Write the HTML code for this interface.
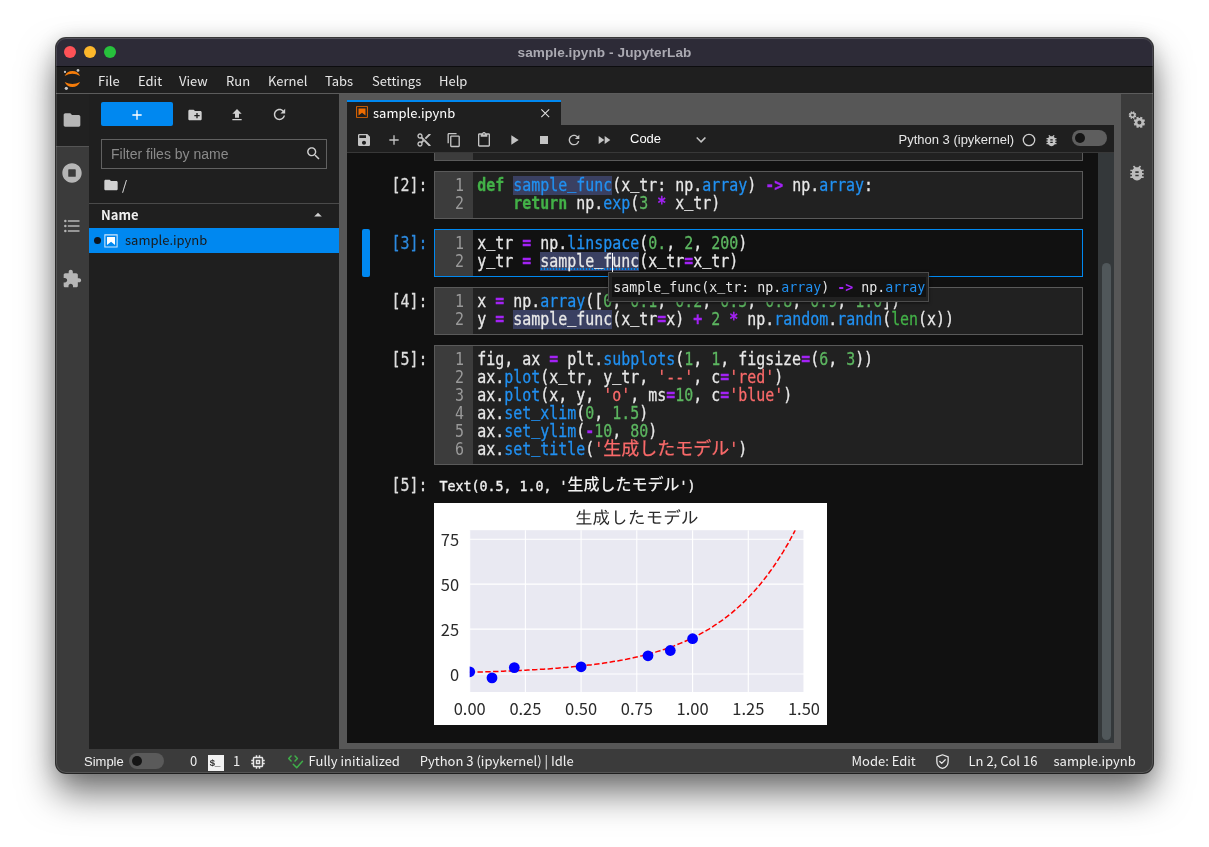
<!DOCTYPE html>
<html lang="ja">
<head>
<meta charset="utf-8">
<title>sample.ipynb - JupyterLab</title>
<style>
html,body{margin:0;padding:0;background:#fff;}
body{width:1209px;height:847px;position:relative;overflow:hidden;
  font-family:"Liberation Sans","Noto Sans CJK JP",sans-serif;font-size:13px;color:#e0e0e0;}
.abs{position:absolute;}
svg{display:block;}
#win{position:absolute;left:56px;top:38px;width:1097px;height:735px;border-radius:10px;
  background:#3b3b3b;
  box-shadow:0 0 0 1px rgba(0,0,0,.75),0 20px 36px rgba(0,0,0,.55),0 2px 20px rgba(0,0,0,.15);}
#clip{will-change:transform;position:absolute;left:0;top:0;width:1097px;height:735px;border-radius:10px;overflow:hidden;}
#titlebar{position:absolute;left:0;top:0;width:1097px;height:29px;background:#2d2b37;
  border-bottom:1px solid #0c0c0e;box-sizing:border-box;}
#titlebar .hl{position:absolute;left:0;top:0;width:100%;height:1px;background:rgba(255,255,255,.06);}
#title{position:absolute;left:0;width:1097px;top:6.500px;letter-spacing:0.070px;text-align:center;
  font:bold 13.6px "Liberation Sans",sans-serif;color:#abaab2;line-height:16px;}
.tl{position:absolute;top:8px;width:12px;height:12px;border-radius:50%;}
#menubar{position:absolute;left:0;top:29px;width:1097px;height:27px;background:#1f1f1f;
  border-bottom:1px solid #5c5c5c;box-sizing:border-box;}
.menu{position:absolute;top:5px;font:13px "Noto Sans CJK JP","Liberation Sans",sans-serif;color:#e6e6e6;line-height:18px;white-space:pre;}
.ns{font-family:"Noto Sans CJK JP","Liberation Sans",sans-serif;}
.mono{font-family:"DejaVu Sans Mono","Liberation Mono","Noto Sans CJK JP",monospace;}

#nb .pr{-webkit-text-stroke-width:0.250px;position:absolute;left:44.5px;width:36px;height:18px;font:14.95px/18px "DejaVu Sans Mono","Liberation Mono",monospace;color:#dedede;white-space:pre;transform:scaleY(1.16);transform-origin:0 14.2px;}
#nb .pr.act{color:#2c8ae0;}
#nb .cell{position:absolute;left:87px;width:649px;box-sizing:border-box;border:1px solid #5a5a5a;background:#212121;}
#nb .cell.act{border-color:#0088f0;background:#111;}
#nb .gut{position:absolute;left:0;top:0;bottom:0;width:38px;background:#3c3c3c;}
#nb .ln{position:absolute;left:0;width:29px;text-align:right;font:14.95px/18px "DejaVu Sans Mono","Liberation Mono",monospace;color:#9a9a9a;height:18px;transform:scaleY(1.16);transform-origin:0 14.2px;}
#nb .cl{-webkit-text-stroke-width:0.250px;position:absolute;left:42.3px;height:18px;font:14.95px/18px "DejaVu Sans Mono","Liberation Mono",monospace;color:#e8e8e8;white-space:pre;transform:scaleY(1.16);transform-origin:0 14.2px;}
#nb .jp{font-family:"Noto Sans CJK JP",sans-serif;font-size:18px;font-weight:400;line-height:0;display:inline-block;transform:scaleY(0.862);transform-origin:0 0;position:relative;top:1.300px;}
#nb .jp2{font-family:"Noto Sans CJK JP",sans-serif;font-size:16px;line-height:0;font-weight:500;display:inline-block;transform:scaleY(0.909);-webkit-text-stroke:0;}
#nb .otxt{position:absolute;height:18px;-webkit-text-stroke:0.350px #f0f0f0;font:normal 13.29px/18px "DejaVu Sans Mono","Liberation Mono",monospace;color:#f0f0f0;white-space:pre;transform:scaleY(1.1);transform-origin:0 13.3px;}
#nb .otxt.tip{font-weight:normal;color:#e6e6e6;-webkit-text-stroke:0;}
#nb .hlb{position:absolute;height:18.9px;background:#3a4062;}
#nb .ulb{position:absolute;height:2px;background-image:radial-gradient(circle,#0088f0 0.9px,transparent 1.2px);background-size:3px 2px;}
.us{position:relative;top:-1.600px;}
.kw{color:#43b148;font-weight:bold;}
.def{color:#2191f2;}
.pp{color:#2191f2;}
.op{color:#a322f5;font-weight:bold;}
.nu{color:#5db761;}
.bi{color:#43b148;}
.st{color:#fa6a6a;}
</style>
</head>
<body>
<div id="win"><div id="clip">
  <div id="titlebar"><div class="hl"></div>
    <div class="tl" style="left:8px;background:#fe5257;"></div>
    <div class="tl" style="left:28px;background:#fdb72b;"></div>
    <div class="tl" style="left:48px;background:#27c13c;"></div>
    <div id="title">sample.ipynb - JupyterLab</div>
  </div>
  <div id="menubar">
    <svg class="abs" style="left:0;top:0" width="34" height="27" viewBox="0 29 34 27"><g fill="#f57c0a"><path d="M8.700 37.900A8.430 8.430 0 0 1 24.100 37.900A15.800 15.800 0 0 0 8.700 37.900Z"/><path d="M8.700 43.900A8.430 8.430 0 0 0 24.100 43.900A15.800 15.800 0 0 1 8.700 43.900Z"/></g><g fill="#c8c8c8"><circle cx="22" cy="32.400" r="1.400"/><circle cx="9" cy="33.900" r="1.100"/><circle cx="10.300" cy="50.300" r="1.600"/></g></svg>
    <div class="menu" style="left:42px">File</div>
    <div class="menu" style="left:82px">Edit</div>
    <div class="menu" style="left:123px">View</div>
    <div class="menu" style="left:170px">Run</div>
    <div class="menu" style="left:212px">Kernel</div>
    <div class="menu" style="left:269px">Tabs</div>
    <div class="menu" style="left:316px">Settings</div>
    <div class="menu" style="left:383px">Help</div>
  </div>

  <!-- left sidebar -->
  <div class="abs" style="left:0;top:56px;width:33px;height:655px;background:#3b3b3b;"></div>
  <div class="abs" style="left:32.5px;top:109px;width:1px;height:602px;background:#555;"></div>
  <div class="abs" style="left:0;top:107.5px;width:33px;height:1px;background:#555;"></div>
  <div class="abs" style="left:0;top:56px;width:33px;height:51.5px;background:#212121;"></div>
  <svg class="abs" style="left:6px;top:71.800px" width="20" height="20" viewBox="0 0 24 24"><path fill="#b6b6b6" d="M10 4H4c-1.100 0-1.990.9-1.990 2L2 18c0 1.100.9 2 2 2h16c1.100 0 2-.9 2-2V8c0-1.100-.9-2-2-2h-8l-2-2z"/></svg>
  <svg class="abs" style="left:6px;top:125px" width="20" height="20" viewBox="0 0 512 512"><path fill="#b6b6b6" d="M256 8C119 8 8 119 8 256s111 248 248 248 248-111 248-248S393 8 256 8zm96 328c0 8.800-7.200 16-16 16H176c-8.800 0-16-7.200-16-16V176c0-8.800 7.200-16 16-16h160c8.800 0 16 7.200 16 16v160z"/></svg>
  <svg class="abs" style="left:6px;top:177.7px" width="20" height="20" viewBox="0 0 24 24"><path fill="#b6b6b6" d="M7,5H21V7H7V5M7,13V11H21V13H7M4,4.500A1.500,1.500 0 0,1 5.500,6A1.500,1.500 0 0,1 4,7.500A1.500,1.500 0 0,1 2.500,6A1.500,1.500 0 0,1 4,4.500M4,10.500A1.500,1.500 0 0,1 5.500,12A1.500,1.500 0 0,1 4,13.500A1.500,1.500 0 0,1 2.500,12A1.500,1.500 0 0,1 4,10.500M7,19V17H21V19H7M4,16.500A1.500,1.500 0 0,1 5.500,18A1.500,1.500 0 0,1 4,19.500A1.500,1.500 0 0,1 2.500,18A1.500,1.500 0 0,1 4,16.500Z"/></svg>
  <svg class="abs" style="left:6px;top:230.700px" width="20" height="20" viewBox="0 0 24 24"><path fill="#b6b6b6" d="M20.500 11H19V7c0-1.100-.9-2-2-2h-4V3.500C13 2.120 11.880 1 10.500 1S8 2.120 8 3.500V5H4c-1.100 0-1.990.9-1.990 2v3.800H3.500c1.490 0 2.700 1.210 2.700 2.700s-1.210 2.700-2.700 2.700H2V20c0 1.100.9 2 2 2h3.800v-1.500c0-1.490 1.210-2.700 2.700-2.700 1.490 0 2.700 1.210 2.700 2.700V22H17c1.100 0 2-.9 2-2v-4h1.500c1.380 0 2.500-1.120 2.500-2.500S21.880 11 20.500 11z"/></svg>

  <!-- file browser -->
  <div class="abs" style="left:33px;top:56px;width:250px;height:655px;background:#1f1f1f;"></div>
  <div class="abs" style="left:45px;top:64px;width:72px;height:24px;background:#0088f0;border-radius:2px;"></div>
  <svg class="abs" style="left:73px;top:68.7px" width="16" height="16" viewBox="0 0 24 24"><path fill="#fff" d="M19 13h-6v6h-2v-6H5v-2h6V5h2v6h6v2z"/></svg>
  <svg class="abs" style="left:131px;top:68.7px" width="16" height="16" viewBox="0 0 24 24"><path fill="#d0d0d0" d="M20 6h-8l-2-2H4c-1.110 0-1.990.890-1.990 2L2 18c0 1.110.890 2 2 2h16c1.110 0 2-.890 2-2V8c0-1.110-.890-2-2-2zm-1 8h-3v3h-2v-3h-3v-2h3V9h2v3h3v2z"/></svg>
  <svg class="abs" style="left:173px;top:68.7px" width="16" height="16" viewBox="0 0 24 24"><path fill="#d0d0d0" d="M9 16h6v-6h4l-7-7-7 7h4zm-4 2h14v2H5z"/></svg>
  <svg class="abs" style="left:214.5px;top:68.2px" width="17" height="17" viewBox="0 0 18 18"><path fill="#d0d0d0" d="M9 13.500c-2.490 0-4.500-2.010-4.500-4.500S6.510 4.500 9 4.500c1.240 0 2.360.520 3.170 1.330L10 8h5V3l-1.760 1.760C12.150 3.680 10.660 3 9 3 5.690 3 3.010 5.690 3.010 9S5.690 15 9 15c2.970 0 5.430-2.160 5.900-5h-1.520c-.460 2-2.240 3.500-4.380 3.500z"/></svg>
  <div class="abs" style="left:45px;top:101px;width:226px;height:30px;box-sizing:border-box;border:1px solid #616161;"></div>
  <div class="abs" style="left:55px;top:108px;font:14px 'Liberation Sans',sans-serif;color:#8a8a8a;line-height:16px;white-space:pre;">Filter files by name</div>
  <svg class="abs" style="left:249px;top:107px" width="17" height="17" viewBox="0 0 24 24"><path fill="#d0d0d0" d="M15.500 14h-.790l-.280-.270C15.410 12.590 16 11.110 16 9.500 16 5.910 13.090 3 9.500 3S3 5.910 3 9.500 5.910 16 9.500 16c1.610 0 3.090-.590 4.230-1.570l.270.280v.790l5 4.990L20.490 19l-4.990-5zm-6 0C7.010 14 5 11.990 5 9.500S7.010 5 9.500 5 14 7.010 14 9.500 11.990 14 9.500 14z"/></svg>
  <svg class="abs" style="left:47px;top:139px" width="16" height="16" viewBox="0 0 24 24"><path fill="#d0d0d0" d="M10 4H4c-1.100 0-1.990.9-1.990 2L2 18c0 1.100.9 2 2 2h16c1.100 0 2-.9 2-2V8c0-1.100-.9-2-2-2h-8l-2-2z"/></svg>
  <div class="abs ns" style="left:66px;top:138px;font-size:13px;color:#e0e0e0;line-height:18px;">/</div>
  <div class="abs" style="left:33px;top:164.500px;width:250px;height:1px;background:#4a4a4a;"></div>
  <div class="abs ns" style="left:45px;top:167px;font-size:13px;font-weight:bold;color:#f0f0f0;line-height:20px;">Name</div>
  <svg class="abs" style="left:253px;top:168px" width="18" height="18" viewBox="0 0 18 18"><path fill="#d0d0d0" d="M5.200 10.500L9 6.800l3.800 3.700H5.200z"/></svg>
  <div class="abs" style="left:33px;top:189.500px;width:250px;height:25px;background:#0088f0;"></div>
  <div class="abs" style="left:37.500px;top:199px;width:7.400px;height:7.400px;border-radius:50%;background:#0d1520;"></div>
  <svg class="abs" style="left:46.500px;top:194.500px" width="16" height="16" viewBox="0 0 22 22"><g fill="#fff"><path fill="#cfe6fb" d="M18.700 3.300v15.400H3.300V3.300h15.400m1.500-1.500H1.800v18.300h18.300l.1-18.300z"/><path d="M16.500 16.500l-5.400-4.300-5.600 4.300v-11h11z"/></g></svg>
  <div class="abs ns" style="left:69px;top:192.500px;font-size:13px;color:#1a1a1a;line-height:18px;">sample.ipynb</div>

  <!-- splitters / dock bg -->
  <div class="abs" style="left:283px;top:56px;width:782px;height:655px;background:#575757;"></div>

  <!-- tab -->
  <div class="abs" style="left:291px;top:62px;width:214px;height:25px;background:#1f1f1f;border-top:2px solid #0088f0;box-sizing:border-box;"></div>
  <svg class="abs" style="left:299px;top:67px" width="14" height="14" viewBox="0 0 22 22"><g fill="#ef6c00"><path d="M18.700 3.300v15.400H3.300V3.300h15.400m1.500-1.500H1.800v18.300h18.300l.1-18.300z"/><path d="M16.500 16.500l-5.400-4.300-5.600 4.300v-11h11z"/></g></svg>
  <div class="abs ns" style="left:317px;top:65.500px;font-size:13px;color:#fff;line-height:18px;">sample.ipynb</div>
  <svg class="abs" style="left:484px;top:69.500px" width="10.500" height="10.500" viewBox="0 0 12 12"><path d="M1.500 1.500L10.500 10.500M10.500 1.500L1.500 10.500" stroke="#e0e0e0" stroke-width="1.200" fill="none"/></svg>
  <!-- toolbar -->
  <div class="abs" style="left:291px;top:87px;width:767px;height:28px;background:#1f1f1f;border-bottom:1px solid #383838;box-sizing:border-box;"></div>
  <svg class="abs" style="left:299.8px;top:94.100px" width="16" height="16" viewBox="0 0 24 24"><path fill="#c4c4c4" d="M17 3H5c-1.110 0-2 .9-2 2v14c0 1.100.890 2 2 2h14c1.100 0 2-.9 2-2V7l-4-4zm-5 16c-1.660 0-3-1.340-3-3s1.340-3 3-3 3 1.340 3 3-1.340 3-3 3zm3-10H5V5h10v4z"/></svg>
  <svg class="abs" style="left:329.8px;top:94.100px" width="16" height="16" viewBox="0 0 24 24"><path fill="#c4c4c4" d="M19 13h-6v6h-2v-6H5v-2h6V5h2v6h6v2z"/></svg>
  <svg class="abs" style="left:359.8px;top:94.100px" width="16" height="16" viewBox="0 0 24 24"><path fill="#c4c4c4" d="M9.640 7.640c.230-.5.360-1.050.360-1.640 0-2.210-1.790-4-4-4S2 3.790 2 6s1.790 4 4 4c.590 0 1.140-.130 1.640-.360L10 12l-2.360 2.360C7.140 14.130 6.590 14 6 14c-2.210 0-4 1.790-4 4s1.790 4 4 4 4-1.790 4-4c0-.590-.130-1.140-.360-1.640L12 14l7 7h3v-1L9.640 7.640zM6 8c-1.100 0-2-.890-2-2s.9-2 2-2 2 .890 2 2-.9 2-2 2zm0 12c-1.100 0-2-.890-2-2s.9-2 2-2 2 .890 2 2-.9 2-2 2zm6-7.500c-.280 0-.5-.220-.5-.5s.220-.5.5-.5.5.220.5.5-.220.5-.5.5zM19 3l-6 6 2 2 7-7V3z"/></svg>
  <svg class="abs" style="left:389.8px;top:94.100px" width="16" height="16" viewBox="0 0 18 18"><path fill="#c4c4c4" d="M11.900 1H3.200c-.8 0-1.500.7-1.500 1.500v10.200h1.500V2.500h8.700V1zm2.200 2.900h-8c-.8 0-1.500.7-1.500 1.500v10.200c0 .8.700 1.500 1.500 1.500h8c.8 0 1.500-.7 1.500-1.500V5.400c0-.8-.7-1.500-1.500-1.500zm0 11.600h-8V5.400h8v10.100z"/></svg>
  <svg class="abs" style="left:419.8px;top:94.100px" width="16" height="16" viewBox="0 0 24 24"><path fill="#c4c4c4" d="M19 2h-4.180C14.400.840 13.300 0 12 0c-1.300 0-2.400.840-2.820 2H5c-1.100 0-2 .9-2 2v16c0 1.100.9 2 2 2h14c1.100 0 2-.9 2-2V4c0-1.100-.9-2-2-2zm-7 0c.550 0 1 .450 1 1s-.450 1-1 1-1-.450-1-1 .450-1 1-1zm7 18H5V4h2v3h10V4h2v16z"/></svg>
  <svg class="abs" style="left:449.8px;top:94.100px" width="16" height="16" viewBox="0 0 24 24"><path fill="#c4c4c4" d="M8 5v14l11-7z"/></svg>
  <svg class="abs" style="left:479.8px;top:94.100px" width="16" height="16" viewBox="0 0 24 24"><path fill="#c4c4c4" d="M6 6h12v12H6z"/></svg>
  <svg class="abs" style="left:509.8px;top:94.100px" width="16" height="16" viewBox="0 0 18 18"><path fill="#c4c4c4" d="M9 13.500c-2.490 0-4.500-2.010-4.500-4.500S6.510 4.500 9 4.500c1.240 0 2.360.520 3.170 1.330L10 8h5V3l-1.760 1.760C12.150 3.680 10.660 3 9 3 5.690 3 3.010 5.690 3.010 9S5.690 15 9 15c2.970 0 5.430-2.160 5.900-5h-1.520c-.460 2-2.240 3.500-4.380 3.500z"/></svg>
  <svg class="abs" style="left:539.8px;top:94.100px" width="16" height="16" viewBox="0 0 24 24"><path fill="#c4c4c4" d="M4 18l8.500-6L4 6v12zm9-12v12l8.500-6L13 6z"/></svg>
  <div class="abs" style="left:574px;top:92px;font:13px 'Liberation Sans',sans-serif;color:#fff;line-height:18px;">Code</div>
  <svg class="abs" style="left:636px;top:93px" width="18" height="18" viewBox="0 0 18 18"><path fill="#c4c4c4" d="M5.200 5.900L9 9.700l3.800-3.800 1.200 1.200-4.900 5-4.900-5z"/></svg>
  <div class="abs" style="left:842.500px;top:93px;font:13px 'Liberation Sans',sans-serif;color:#e6e6e6;line-height:18px;white-space:pre;">Python 3 (ipykernel)</div>
  <svg class="abs" style="left:965px;top:93.500px" width="16" height="16" viewBox="0 0 16 16"><circle cx="8" cy="8" r="5.700" fill="none" stroke="#cfcfcf" stroke-width="1.300"/></svg>
  <svg class="abs" style="left:988px;top:94.500px" width="15" height="15" viewBox="0 0 24 24"><path fill="#c4c4c4" d="M20 8h-2.810c-.450-.780-1.070-1.450-1.820-1.960L17 4.410 15.590 3l-2.170 2.170C12.960 5.060 12.490 5 12 5c-.490 0-.960.060-1.410.170L8.410 3 7 4.410l1.620 1.630C7.880 6.550 7.260 7.220 6.810 8H4v2h2.090c-.050.330-.090.660-.090 1v1H4v2h2v1c0 .340.040.670.090 1H4v2h2.810c1.040 1.790 2.970 3 5.190 3s4.150-1.210 5.190-3H20v-2h-2.090c.050-.330.090-.660.090-1v-1h2v-2h-2v-1c0-.340-.040-.670-.090-1H20V8zm-6 8h-4v-2h4v2zm0-4h-4v-2h4v2z"/></svg>
  <div class="abs" style="left:1015.700px;top:91.700px;width:35.500px;height:16.300px;border-radius:8.200px;background:#5e5e5e;"></div>
  <div class="abs" style="left:1019px;top:94.800px;width:10px;height:10px;border-radius:50%;background:#151515;"></div>
  <!-- notebook -->
  <div class="abs" id="nb" style="left:291px;top:115px;width:767px;height:590px;background:#111;overflow:hidden;">
<!--NBSTART-->
<div class="cell" style="top:-33.0px;height:41px"><div class="gut"></div></div>
<div class="pr" style="top:23.9px">[2]:</div>
<div class="cell" style="top:18.0px;height:48px"><div class="gut"></div>
<div class="hlb" style="left:78.3px;top:4.2px;width:99.0px"></div><div class="ln" style="top:4.9px">1</div><div class="cl" style="top:4.9px"><span class="kw">def</span> <span class="def">sample<span class="us">_</span>func</span>(x<span class="us">_</span>tr: np.<span class="pp">array</span>) <span class="op">-&gt;</span> np.<span class="pp">array</span>:</div>
<div class="ln" style="top:22.9px">2</div><div class="cl" style="top:22.9px">    <span class="kw">return</span> np.<span class="pp">exp</span>(<span class="nu">3</span> <span class="op">*</span> x<span class="us">_</span>tr)</div>
</div>
<div class="pr act" style="top:81.9px">[3]:</div>
<div class="abs" style="left:15px;top:76.0px;width:8px;height:48px;background:#0088f0;border-radius:2px;"></div>
<div class="cell act" style="top:76.0px;height:48px"><div class="gut"></div>
<div class="ln" style="top:4.9px">1</div><div class="cl" style="top:4.9px">x<span class="us">_</span>tr <span class="op">=</span> np.<span class="pp">linspace</span>(<span class="nu">0.</span>, <span class="nu">2</span>, <span class="nu">200</span>)</div>
<div class="hlb" style="left:105.3px;top:22.2px;width:99.0px"></div><div class="ulb" style="left:105.3px;top:38.2px;width:99.0px"></div><div class="ln" style="top:22.9px">2</div><div class="cl" style="top:22.9px">y<span class="us">_</span>tr <span class="op">=</span> sample<span class="us">_</span>func(x<span class="us">_</span>tr<span class="op">=</span>x<span class="us">_</span>tr)</div>
</div>
<div class="pr" style="top:139.9px">[4]:</div>
<div class="cell" style="top:134.0px;height:48px"><div class="gut"></div>
<div class="ln" style="top:4.9px">1</div><div class="cl" style="top:4.9px">x <span class="op">=</span> np.<span class="pp">array</span>([<span class="nu">0</span>, <span class="nu">0.1</span>, <span class="nu">0.2</span>, <span class="nu">0.5</span>, <span class="nu">0.8</span>, <span class="nu">0.9</span>, <span class="nu">1.0</span>])</div>
<div class="hlb" style="left:78.3px;top:22.2px;width:99.0px"></div><div class="ln" style="top:22.9px">2</div><div class="cl" style="top:22.9px">y <span class="op">=</span> sample<span class="us">_</span>func(x<span class="us">_</span>tr<span class="op">=</span>x) <span class="op">+</span> <span class="nu">2</span> <span class="op">*</span> np.<span class="pp">random</span>.<span class="pp">randn</span>(<span class="bi">len</span>(x))</div>
</div>
<div class="pr" style="top:197.9px">[5]:</div>
<div class="cell" style="top:192.0px;height:120px"><div class="gut"></div>
<div class="ln" style="top:4.9px">1</div><div class="cl" style="top:4.9px">fig, ax <span class="op">=</span> plt.<span class="pp">subplots</span>(<span class="nu">1</span>, <span class="nu">1</span>, figsize<span class="op">=</span>(<span class="nu">6</span>, <span class="nu">3</span>))</div>
<div class="ln" style="top:22.9px">2</div><div class="cl" style="top:22.9px">ax.<span class="pp">plot</span>(x<span class="us">_</span>tr, y<span class="us">_</span>tr, <span class="st">'--'</span>, c<span class="op">=</span><span class="st">'red'</span>)</div>
<div class="ln" style="top:40.9px">3</div><div class="cl" style="top:40.9px">ax.<span class="pp">plot</span>(x, y, <span class="st">'o'</span>, ms<span class="op">=</span><span class="nu">10</span>, c<span class="op">=</span><span class="st">'blue'</span>)</div>
<div class="ln" style="top:58.9px">4</div><div class="cl" style="top:58.9px">ax.<span class="pp">set<span class="us">_</span>xlim</span>(<span class="nu">0</span>, <span class="nu">1.5</span>)</div>
<div class="ln" style="top:76.9px">5</div><div class="cl" style="top:76.9px">ax.<span class="pp">set<span class="us">_</span>ylim</span>(<span class="op">-</span><span class="nu">10</span>, <span class="nu">80</span>)</div>
<div class="ln" style="top:94.9px">6</div><div class="cl" style="top:94.9px">ax.<span class="pp">set<span class="us">_</span>title</span>(<span class="st">'<span class="jp">生成したモデル</span>'</span>)</div>
</div>
<div class="abs" style="left:265.2px;top:99.5px;width:1.200px;height:19px;background:#fff;"></div>
<div class="pr" style="top:323.5px">[5]:</div>
<div class="otxt" style="left:92.5px;top:324.5px">Text(0.5, 1.0, '<span class="jp2">生成したモデル</span>')</div>
<!--CHARTSTART-->
<svg class="abs" style="left:86.5px;top:349.5px" width="393.7" height="222.5" viewBox="0 0 393.7 222.5">
<rect width="393.7" height="222.5" fill="#fff"/>
<rect x="35.7" y="27.2" width="334.3" height="161.8" fill="#e9e9f2"/>
<g stroke="#fff" stroke-width="1.1">
<line x1="35.7" y1="27.2" x2="35.7" y2="189.0"/><line x1="91.4" y1="27.2" x2="91.4" y2="189.0"/><line x1="147.1" y1="27.2" x2="147.1" y2="189.0"/><line x1="202.8" y1="27.2" x2="202.8" y2="189.0"/><line x1="258.6" y1="27.2" x2="258.6" y2="189.0"/><line x1="314.3" y1="27.2" x2="314.3" y2="189.0"/><line x1="370.0" y1="27.2" x2="370.0" y2="189.0"/><line x1="35.7" y1="171.0" x2="370.0" y2="171.0"/><line x1="35.7" y1="126.1" x2="370.0" y2="126.1"/><line x1="35.7" y1="81.1" x2="370.0" y2="81.1"/><line x1="35.7" y1="36.2" x2="370.0" y2="36.2"/>
</g>
<clipPath id="axc"><rect x="35.7" y="27.2" width="334.3" height="161.8"/></clipPath>
<g clip-path="url(#axc)"><path d="M35.7 169.2 L37.9 169.2 L40.2 169.1 L42.4 169.1 L44.7 169.0 L46.9 168.9 L49.1 168.9 L51.4 168.8 L53.6 168.7 L55.9 168.7 L58.1 168.6 L60.3 168.5 L62.6 168.4 L64.8 168.4 L67.1 168.3 L69.3 168.2 L71.5 168.1 L73.8 168.0 L76.0 167.9 L78.3 167.8 L80.5 167.7 L82.7 167.6 L85.0 167.5 L87.2 167.4 L89.5 167.3 L91.7 167.2 L93.9 167.1 L96.2 167.0 L98.4 166.8 L100.7 166.7 L102.9 166.6 L105.1 166.4 L107.4 166.3 L109.6 166.2 L111.9 166.0 L114.1 165.9 L116.3 165.7 L118.6 165.5 L120.8 165.4 L123.1 165.2 L125.3 165.0 L127.5 164.8 L129.8 164.6 L132.0 164.4 L134.3 164.2 L136.5 164.0 L138.7 163.8 L141.0 163.6 L143.2 163.4 L145.5 163.1 L147.7 162.9 L149.9 162.7 L152.2 162.4 L154.4 162.1 L156.7 161.9 L158.9 161.6 L161.1 161.3 L163.4 161.0 L165.6 160.7 L167.9 160.4 L170.1 160.0 L172.3 159.7 L174.6 159.4 L176.8 159.0 L179.1 158.6 L181.3 158.3 L183.5 157.9 L185.8 157.5 L188.0 157.1 L190.3 156.6 L192.5 156.2 L194.7 155.7 L197.0 155.3 L199.2 154.8 L201.5 154.3 L203.7 153.8 L205.9 153.2 L208.2 152.7 L210.4 152.1 L212.6 151.6 L214.9 151.0 L217.1 150.4 L219.4 149.7 L221.6 149.1 L223.8 148.4 L226.1 147.7 L228.3 147.0 L230.6 146.3 L232.8 145.5 L235.0 144.7 L237.3 143.9 L239.5 143.1 L241.8 142.2 L244.0 141.3 L246.2 140.4 L248.5 139.5 L250.7 138.5 L253.0 137.5 L255.2 136.5 L257.4 135.5 L259.7 134.4 L261.9 133.2 L264.2 132.1 L266.4 130.9 L268.6 129.7 L270.9 128.4 L273.1 127.1 L275.4 125.8 L277.6 124.4 L279.8 122.9 L282.1 121.5 L284.3 119.9 L286.6 118.4 L288.8 116.8 L291.0 115.1 L293.3 113.4 L295.5 111.6 L297.8 109.8 L300.0 107.9 L302.2 106.0 L304.5 104.0 L306.7 102.0 L309.0 99.9 L311.2 97.7 L313.4 95.4 L315.7 93.1 L317.9 90.7 L320.2 88.3 L322.4 85.8 L324.6 83.1 L326.9 80.4 L329.1 77.7 L331.4 74.8 L333.6 71.9 L335.8 68.8 L338.1 65.7 L340.3 62.5 L342.6 59.2 L344.8 55.7 L347.0 52.2 L349.3 48.6 L351.5 44.8 L353.8 41.0 L356.0 37.0 L358.2 32.9 L360.5 28.7 L361.2 27.2" fill="none" stroke="#ff0000" stroke-width="1.500" stroke-dasharray="5.400 2.400"/>
<circle cx="35.7" cy="168.8" r="5.400" fill="#0000ff"/><circle cx="58.0" cy="174.9" r="5.400" fill="#0000ff"/><circle cx="80.3" cy="164.6" r="5.400" fill="#0000ff"/><circle cx="147.1" cy="163.8" r="5.400" fill="#0000ff"/><circle cx="214.0" cy="152.8" r="5.400" fill="#0000ff"/><circle cx="236.3" cy="147.5" r="5.400" fill="#0000ff"/><circle cx="258.6" cy="135.7" r="5.400" fill="#0000ff"/>
</g>
<g font-family="'Noto Sans CJK JP','Liberation Sans',sans-serif" font-weight="400" fill="#2a2a2a">
<text x="202.8" y="20.7" font-size="17.700" font-weight="400" font-family="IPAGothic,'Noto Sans CJK JP',sans-serif" text-anchor="middle">生成したモデル</text>
<text x="35.7" y="212.4" font-size="16.500" text-anchor="middle">0.00</text><text x="91.4" y="212.4" font-size="16.500" text-anchor="middle">0.25</text><text x="147.1" y="212.4" font-size="16.500" text-anchor="middle">0.50</text><text x="202.8" y="212.4" font-size="16.500" text-anchor="middle">0.75</text><text x="258.6" y="212.4" font-size="16.500" text-anchor="middle">1.00</text><text x="314.3" y="212.4" font-size="16.500" text-anchor="middle">1.25</text><text x="370.0" y="212.4" font-size="16.500" text-anchor="middle">1.50</text>
<text x="25.1" y="178.3" font-size="16.500" text-anchor="end">0</text><text x="25.1" y="133.4" font-size="16.500" text-anchor="end">25</text><text x="25.1" y="88.4" font-size="16.500" text-anchor="end">50</text><text x="25.1" y="43.5" font-size="16.500" text-anchor="end">75</text>
</g>
</svg>
<!--CHARTEND-->
<div class="abs" style="left:261.4px;top:119.0px;width:321.1px;height:29.500px;background:#212121;border:1px solid #4c4c4c;box-sizing:border-box;box-shadow:0 1px 3px rgba(0,0,0,.5);"></div>
<div class="abs" style="left:265.3px;top:123.5px;width:313.7px;height:20.500px;background:#121212;"></div>
<div class="otxt tip" style="left:266.3px;top:125.5px;">sample<span class="us">_</span>func(x<span class="us">_</span>tr: np.<span class="pp">array</span>) <span class="op">-&gt;</span> np.<span class="pp">array</span></div>
<div class="abs" style="left:751px;top:0;width:16px;height:590px;background:#34383a;"></div>
<div class="abs" style="left:755px;top:110.0px;width:9px;height:477.2px;background:#50575a;border-radius:4.5px;"></div>
<!--NBEND-->
  </div>

  <!-- right sidebar -->
  <div class="abs" style="left:1065px;top:56px;width:33px;height:655px;background:#3b3b3b;"></div>
  <svg class="abs" style="left:1065px;top:66px" width="32" height="32" viewBox="0 0 32 32"><path fill="#bdbdbd" fill-rule="evenodd" d="M14.47 11.50 L15.33 11.82 L14.72 13.30 L13.88 12.92 L13.32 13.48 L13.70 14.32 L12.22 14.93 L11.90 14.07 L11.10 14.07 L10.78 14.93 L9.30 14.32 L9.68 13.48 L9.12 12.92 L8.28 13.30 L7.67 11.82 L8.53 11.50 L8.53 10.70 L7.67 10.38 L8.28 8.90 L9.12 9.28 L9.68 8.72 L9.30 7.88 L10.78 7.27 L11.10 8.13 L11.90 8.13 L12.22 7.27 L13.70 7.88 L13.32 8.72 L13.88 9.28 L14.72 8.90 L15.33 10.38 L14.47 10.70Z M12.80 11.10 A1.3 1.3 0 1 0 10.20 11.10 A1.3 1.3 0 1 0 12.80 11.10Z"/><path fill="#bdbdbd" fill-rule="evenodd" d="M22.86 19.00 L24.10 19.47 L23.19 21.68 L21.98 21.13 L21.13 21.98 L21.68 23.19 L19.47 24.10 L19.00 22.86 L17.80 22.86 L17.33 24.10 L15.12 23.19 L15.67 21.98 L14.82 21.13 L13.61 21.68 L12.70 19.47 L13.94 19.00 L13.94 17.80 L12.70 17.33 L13.61 15.12 L14.82 15.67 L15.67 14.82 L15.12 13.61 L17.33 12.70 L17.80 13.94 L19.00 13.94 L19.47 12.70 L21.68 13.61 L21.13 14.82 L21.98 15.67 L23.19 15.12 L24.10 17.33 L22.86 17.80Z M20.40 18.40 A2.0 2.0 0 1 0 16.40 18.40 A2.0 2.0 0 1 0 20.40 18.40Z"/></svg>
  <svg class="abs" style="left:1070.8px;top:125.2px" width="20" height="20" viewBox="0 0 24 24"><path fill="#bdbdbd" d="M20 8h-2.810c-.450-.780-1.070-1.450-1.820-1.960L17 4.410 15.590 3l-2.170 2.170C12.960 5.060 12.490 5 12 5c-.490 0-.960.060-1.410.170L8.410 3 7 4.410l1.620 1.630C7.880 6.550 7.260 7.220 6.810 8H4v2h2.090c-.050.330-.090.660-.090 1v1H4v2h2v1c0 .340.040.670.090 1H4v2h2.810c1.040 1.790 2.970 3 5.190 3s4.150-1.210 5.190-3H20v-2h-2.090c.050-.330.090-.660.090-1v-1h2v-2h-2v-1c0-.340-.040-.670-.090-1H20V8zm-6 8h-4v-2h4v2zm0-4h-4v-2h4v2z"/></svg>
  <!-- status bar -->
  <div class="abs" style="left:0;top:711px;width:1098px;height:24px;background:#3b3b3b;"></div>
  <div class="abs" style="left:28px;top:714.500px;font:13px 'Liberation Sans',sans-serif;color:#f0f0f0;line-height:18px;">Simple</div>
  <div class="abs" style="left:73.200px;top:715px;width:35px;height:16px;border-radius:8px;background:#5a5a5a;"></div>
  <div class="abs" style="left:75.600px;top:718px;width:10px;height:10px;border-radius:50%;background:#151515;"></div>
  <div class="abs ns" style="left:134px;top:713.500px;font-size:13px;color:#f0f0f0;line-height:18px;">0</div>
  <div class="abs" style="left:152px;top:717px;width:16px;height:15.500px;background:#f2f2f2;"></div>
  <div class="abs" style="left:153.500px;top:719.500px;font:bold 9.500px/12px 'Liberation Mono',monospace;color:#333;letter-spacing:-0.5px;">$_</div>
  <div class="abs ns" style="left:177px;top:713.500px;font-size:13px;color:#f0f0f0;line-height:18px;">1</div>
  <svg class="abs" style="left:192.700px;top:714.900px" width="18" height="18" viewBox="0 0 24 24"><path fill="#e8e8e8" d="M15 9H9v6h6V9zm-2 4h-2v-2h2v2zm8-2V9h-2V7c0-1.100-.9-2-2-2h-2V3h-2v2h-2V3H9v2H7c-1.100 0-2 .9-2 2v2H3v2h2v2H3v2h2v2c0 1.100.9 2 2 2h2v2h2v-2h2v2h2v-2h2c1.100 0 2-.9 2-2v-2h2v-2h-2v-2h2zm-4 6H7V7h10v10z"/></svg>
  <svg class="abs" style="left:228.500px;top:712.500px" width="23" height="23" viewBox="0 0 20 20"><g fill="none" stroke="#3fae49" stroke-width="1.300" stroke-linecap="round" stroke-linejoin="round"><path d="M5.300 4.300L3.200 6.500l2.100 2.200"/><path d="M8.700 4.300l2.100 2.200-2.100 2.200"/><path d="M7.200 11.500l3 3 5-5.600"/></g></svg>
  <div class="abs ns" style="left:252.600px;top:713.500px;font-size:13px;color:#f0f0f0;line-height:18px;white-space:pre;">Fully initialized</div>
  <div class="abs ns" style="left:363.800px;top:713.500px;font-size:13px;color:#f0f0f0;line-height:18px;white-space:pre;">Python 3 (ipykernel) | Idle</div>
  <div class="abs ns" style="left:795.500px;top:713.500px;font-size:13px;color:#f0f0f0;line-height:18px;white-space:pre;">Mode: Edit</div>
  <svg class="abs" style="left:878px;top:714.800px" width="17" height="17" viewBox="0 0 24 24"><path fill="none" stroke="#e8e8e8" stroke-width="1.800" stroke-linejoin="round" d="M12 2.500L4 5.500v6c0 5 3.400 9 8 10.300 4.600-1.300 8-5.300 8-10.300v-6l-8-3z"/><path fill="none" stroke="#e8e8e8" stroke-width="1.800" stroke-linecap="round" stroke-linejoin="round" d="M8.200 12l2.700 2.700 5-5.200"/></svg>
  <div class="abs ns" style="left:912.500px;top:713.500px;font-size:13px;color:#f0f0f0;line-height:18px;white-space:pre;">Ln 2, Col 16</div>
  <div class="abs ns" style="left:997.500px;top:713.500px;font-size:13px;color:#f0f0f0;line-height:18px;white-space:pre;">sample.ipynb</div>

<div class="abs" style="left:0;top:0;width:1097px;height:735px;border-radius:10px;box-shadow:inset 0 0 0 1px rgba(255,255,255,.13);pointer-events:none;"></div>
</div></div>
</body>
</html>
